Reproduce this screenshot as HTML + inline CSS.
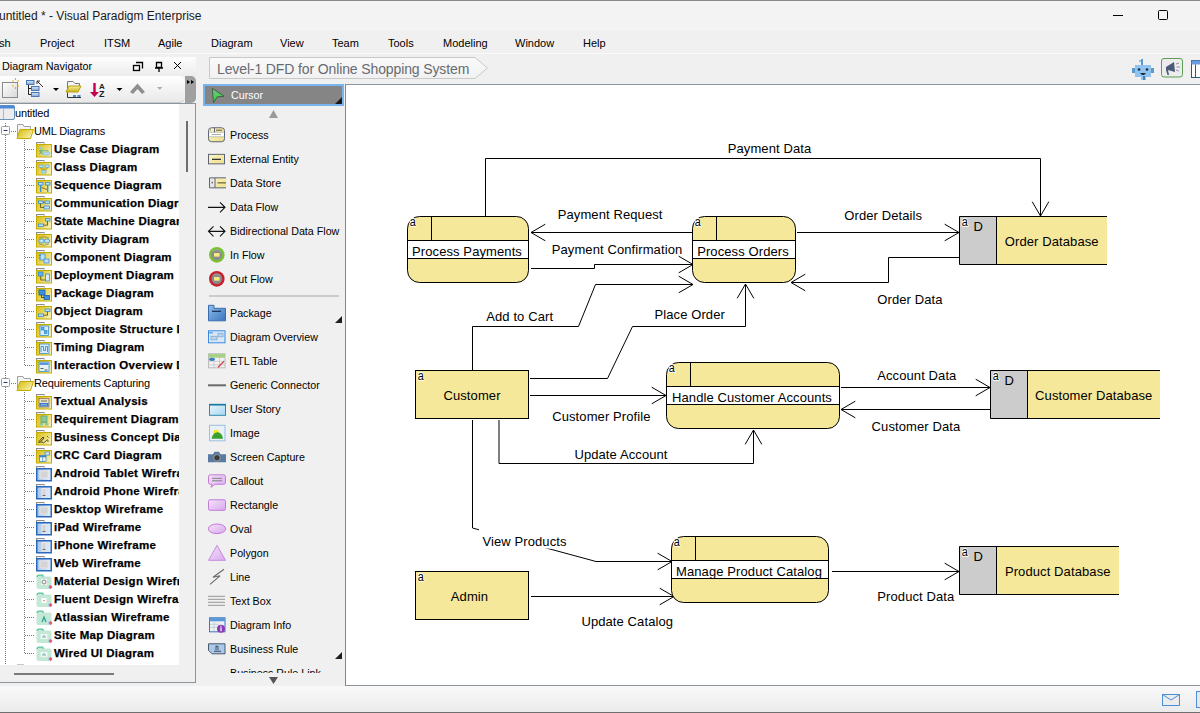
<!DOCTYPE html>
<html><head><meta charset="utf-8">
<style>
*{margin:0;padding:0;box-sizing:border-box}
html,body{width:1200px;height:713px;overflow:hidden}
body{position:relative;background:#f0f0f0;font-family:"Liberation Sans",sans-serif;color:#000}
.a{position:absolute}
.t{position:absolute;white-space:nowrap;font-size:11px;line-height:12px}
#title{left:0;top:0;width:1200px;height:31px;background:#f3f3f3;border-top:1px solid #8a8a8a}
#menu{left:0;top:31px;width:1200px;height:24px;background:#f0f0f0}
.mi{position:absolute;top:6px;font-size:11px;line-height:12px;white-space:nowrap}
#nav{left:0;top:56px;width:196px;height:627px;background:#f0f0f0}
#navhdr{left:0;top:57px;width:196px;height:19px;background:linear-gradient(#fdfdfd,#ececec)}
#navtb{left:0;top:76px;width:185px;height:27px;background:linear-gradient(#ffffff,#e9e9e9);border-radius:0 6px 6px 0;border-bottom:1px solid #c9c9c9}
#navgrip{left:185px;top:76px;width:11px;height:27px;background:#a0a0a0;border-radius:0 5px 5px 0}
#tree{left:0;top:103px;width:196px;height:580px;background:#f0f0f0;border:1px solid #8c949c;border-left:none}
#treew{left:0;top:104px;width:179px;height:561px;background:#fff}
.tr{position:absolute;white-space:nowrap;font-size:11px;line-height:14px;letter-spacing:-0.15px}
.tb{position:absolute;white-space:nowrap;font-size:11.5px;line-height:14px;font-weight:bold;letter-spacing:0.28px;-webkit-text-stroke:0.25px #000}
#pal{left:200px;top:84px;width:145px;height:602px;background:#f0f0f0}
.pt{position:absolute;white-space:nowrap;font-size:10.7px;line-height:13px}
#canvas{left:345px;top:84px;width:855px;height:602px;background:#fff;border-left:1px solid #7a8590;border-top:1px solid #8c949c;border-bottom:1px solid #8c949c}
#status{left:0;top:686px;width:1200px;height:27px;background:linear-gradient(#f9f9f9,#ebebeb);border-bottom:1px solid #6e6e6e}
</style></head><body>
<div id="title" class="a"></div>
<div class="t" style="left:-1px;top:9px;font-size:12px;line-height:14px;color:#1a1a1a">untitled * - Visual Paradigm Enterprise</div>
<div id="menu" class="a"></div>
<div class="mi" style="left:-1px;top:37px">sh</div>
<div class="mi" style="left:40px;top:37px">Project</div>
<div class="mi" style="left:104px;top:37px">ITSM</div>
<div class="mi" style="left:158px;top:37px">Agile</div>
<div class="mi" style="left:211px;top:37px">Diagram</div>
<div class="mi" style="left:280px;top:37px">View</div>
<div class="mi" style="left:332px;top:37px">Team</div>
<div class="mi" style="left:388px;top:37px">Tools</div>
<div class="mi" style="left:443px;top:37px">Modeling</div>
<div class="mi" style="left:515px;top:37px">Window</div>
<div class="mi" style="left:583px;top:37px">Help</div>

<div id="nav" class="a"></div>
<div id="navhdr" class="a"></div>
<div class="t" style="left:2px;top:60px;font-size:10.8px">Diagram Navigator</div>
<div id="navtb" class="a"></div>
<div id="navgrip" class="a"></div>
<div id="tree" class="a"></div>
<div id="treew" class="a"></div>

<div id="pal" class="a"></div>
<div id="canvas" class="a"></div>
<div id="status" class="a"></div>

<!-- window controls -->
<div class="a" style="left:1113px;top:15px;width:10px;height:1px;background:#000"></div>
<div class="a" style="left:1158px;top:10px;width:10px;height:10px;border:1px solid #000;border-radius:1.5px"></div>
<div class="a" style="left:0;top:53px;width:1200px;height:1px;background:#fafafa"></div>
<!-- breadcrumb -->
<svg class="a" style="left:200px;top:52px" width="300" height="30"><defs><linearGradient id="bc" x1="0" y1="0" x2="0" y2="1"><stop offset="0" stop-color="#fafafa"/><stop offset="1" stop-color="#f1f1f1"/></linearGradient></defs>
<path d="M9.5,5.5 H275 L287.5,16 L275,26.5 H9.5 Z" fill="url(#bc)" stroke="#c9c9c9"/></svg>
<div class="t" style="left:217px;top:61px;font-size:14px;line-height:16px;color:#676b71;letter-spacing:-0.12px">Level-1 DFD for Online Shopping System</div>
<!-- right toolbar icons -->
<svg class="a" style="left:1128px;top:56px" width="72" height="26">
<rect x="13" y="3" width="2" height="6" fill="#5a9ad0"/><rect x="11" y="4" width="2" height="2" fill="#90c4ef"/>
<rect x="7" y="9" width="16" height="12" fill="#90c4ef"/><rect x="4" y="12" width="3" height="5" fill="#5a9ad0"/><rect x="23" y="12" width="3" height="5" fill="#5a9ad0"/>
<rect x="13" y="21" width="5" height="3" fill="#90c4ef"/><rect x="15" y="20" width="2" height="4" fill="#4a80b8"/>
<circle cx="11" cy="13.5" r="1.3" fill="#1a2a40"/><circle cx="19" cy="13.5" r="1.3" fill="#1a2a40"/><path d="M12,17 H18 L16,19 H14 Z" fill="#1a2a40"/>
<rect x="33.5" y="2.5" width="21" height="18.5" rx="2.5" fill="#ececec" stroke="#5d9c54"/>
<path d="M38,11 L46,6 L47,16 L40,14 L41,19 L39.5,19 L38,14 Z" fill="#4a5a78"/><path d="M48,8 L51,7 M48.5,11 H52 M48,14 L51,15" stroke="#4a5a78" stroke-width="0.6"/>
<rect x="63.5" y="4.5" width="12" height="17" fill="#fff" stroke="#2a5a78"/><rect x="63.5" y="4.5" width="12" height="4" fill="#6a9ae0"/><path d="M67.5,8.5 V21.5" stroke="#2a5a78"/>
</svg>
<!-- status bar icons -->
<svg class="a" style="left:1158px;top:690px" width="42" height="20">
<rect x="4.5" y="4.5" width="17" height="11" fill="#ececec" stroke="#4a90d8"/><path d="M4.5,4.5 L13,10 L21.5,4.5" fill="none" stroke="#4a90d8"/>
<rect x="38.5" y="1.5" width="8" height="16" fill="#e8e8e8" stroke="#4a90d8"/>
</svg>
<svg class="a" style="left:130px;top:60px" width="56" height="14" viewBox="0 0 56 14" ><g fill="none" stroke="#000" stroke-width="1.3"><rect x="3.5" y="5.5" width="6" height="5"/><path d="M6,2.5 H12.5 V8.5"/><path d="M26.5,2.5 h5 v5 h-5 z M25,8 H33 M29,8 V12"/><path d="M44,2 L51,9 M51,2 L44,9" stroke-width="1"/></g></svg>
<svg class="a" style="left:0px;top:75px" width="196" height="28" viewBox="0 0 196 28" ><defs><linearGradient id="gw" x1="0" y1="0" x2="1" y2="1"><stop offset="0" stop-color="#fff"/><stop offset="1" stop-color="#d8d8d8"/></linearGradient><linearGradient id="gb" x1="0" y1="0" x2="0" y2="1"><stop offset="0" stop-color="#dbe8f7"/><stop offset="1" stop-color="#7fa6d6"/></linearGradient><linearGradient id="gy" x1="0" y1="0" x2="0" y2="1"><stop offset="0" stop-color="#f7ef9a"/><stop offset="1" stop-color="#c9b21a"/></linearGradient></defs><rect x="2.5" y="7.5" width="15" height="15" fill="url(#gw)" stroke="#8a8a8a"/><g stroke="#f0b400" stroke-width="1.2"><path d="M12,6 h2 M17,6 h2 M12,11 h2 M17,11 h2 M15.5,3 v2 M15.5,12 v2"/></g><path d="M28.5,9.5 V19.5 H31.5 M28.5,13.5 H31.5" fill="none" stroke="#222"/><rect x="26.5" y="5.5" width="7.5" height="4" fill="url(#gb)" stroke="#4a78b0"/><rect x="31.5" y="11.5" width="7.5" height="4" fill="url(#gb)" stroke="#4a78b0"/><rect x="31.5" y="17.5" width="7.5" height="4" fill="url(#gb)" stroke="#4a78b0"/><path d="M37,6 L43,12 M37,6 h3 M37,6 v3" stroke="#333" fill="none"/><path d="M53,13 h6 l-3,3 z" fill="#000"/><path d="M67.5,22 V6.5 H73 L75,8.5 H79.5 V11" fill="#f4f4f4" stroke="#777"/><path d="M66,17 L69,11 H81 L78,17 Z" fill="url(#gy)" stroke="#b8a010"/><path d="M67.5,18 V22.5 H81" stroke="#333" fill="none"/><rect x="73" y="20" width="3" height="2" fill="#4a8ad0"/><rect x="77.5" y="20" width="3" height="2" fill="#4a8ad0"/><path d="M94.5,8 V19" stroke="#c4004c" stroke-width="2.4"/><path d="M90,17 L94.5,22 L99,17 Z" fill="#c4004c"/><text x="99" y="13.5" font-family="Liberation Sans" font-weight="bold" font-size="8" fill="#222">A</text><text x="99" y="22" font-family="Liberation Sans" font-weight="bold" font-size="9" fill="#222">Z</text><path d="M116.5,13 h6 l-3,3 z" fill="#000"/><path d="M130,17 L137.5,8.5 L145,17 L142,19 L137.5,14 L133,19 Z" fill="#8f8f8f"/><path d="M157,12 h5.5 l-2.75,2.75 z" fill="#aaa"/><path d="M187,5 l3,2 l-3,2 z M191,5 l3,2 l-3,2 z" fill="#000"/></svg>
<div class="a" style="left:0;top:104px;width:179px;height:561px;overflow:hidden"><svg class="a" style="left:0;top:0" width="179" height="561"><defs><linearGradient id="fy" x1="0" y1="0" x2="1" y2="0.6"><stop offset="0" stop-color="#d6ba10"/><stop offset="0.55" stop-color="#e8d658"/><stop offset="1" stop-color="#f6eeb0"/></linearGradient><linearGradient id="fb" x1="0" y1="0" x2="1" y2="0"><stop offset="0" stop-color="#a6c4ea"/><stop offset="1" stop-color="#e6eef8"/></linearGradient></defs><path d="M5.5,19 V561" stroke="#7a7a7a" stroke-width="1" stroke-dasharray="1,1"/><path d="M24.5,36 V261.5" stroke="#7a7a7a" stroke-width="1" stroke-dasharray="1,1"/><path d="M24.5,288 V549.5" stroke="#7a7a7a" stroke-width="1" stroke-dasharray="1,1"/><rect x="1.5" y="22.5" width="8" height="8" rx="1" fill="#fff" stroke="#9a9a9a"/><path d="M3.5,26.5 H7.5" stroke="#1e3c78"/><path d="M11,27.5 H17" stroke="#7a7a7a" stroke-width="1" stroke-dasharray="1,1"/><rect x="1.5" y="274.5" width="8" height="8" rx="1" fill="#fff" stroke="#9a9a9a"/><path d="M3.5,278.5 H7.5" stroke="#1e3c78"/><path d="M11,279.5 H17" stroke="#7a7a7a" stroke-width="1" stroke-dasharray="1,1"/><rect x="-2" y="1.5" width="16.5" height="14" rx="1.5" fill="#ececec" stroke="#6a90b8"/><rect x="-2" y="1.5" width="16.5" height="3" rx="1" fill="#4a88d8"/><path d="M3.5,4.5 V15" stroke="#a9b8c8"/><g transform="translate(17,20)"><path d="M0.5,13 V0.5 H6 L7,2.5 H13.5 V10" fill="#f4f4f4" stroke="#a0a0a0"/><path d="M0,14.5 L3,5.5 H16.5 L13.5,14.5 Z" fill="url(#fy)" stroke="#c3ab00"/></g><g transform="translate(17,272)"><path d="M0.5,13 V0.5 H6 L7,2.5 H13.5 V10" fill="#f4f4f4" stroke="#a0a0a0"/><path d="M0,14.5 L3,5.5 H16.5 L13.5,14.5 Z" fill="url(#fy)" stroke="#c3ab00"/></g><path d="M25,45.5 H34" stroke="#7a7a7a" stroke-width="1" stroke-dasharray="1,1"/><g transform="translate(36,38)"><defs></defs><rect x="0.5" y="0.5" width="7.5" height="2" fill="#f2f2f2" stroke="#8c8c8c"/><rect x="0.5" y="2.5" width="15" height="12.5" fill="url(#fy)" stroke="#c3ab00"/><circle cx="5" cy="6" r="1.5" fill="#8fd0e0"/><path d="M5,7.5 V10 L3.5,12.5 M5,10 L6.5,12.5 M3,9 H7" stroke="#4ab0a0" fill="none"/><rect x="7" y="10" width="7" height="3" rx="1.5" fill="#b8dcf0" stroke="#6aaed0" stroke-width="0.6"/><path d="M6,8.5 H12 V10" stroke="#4ab0a0" fill="none" stroke-width="0.6"/></g><path d="M25,63.5 H34" stroke="#7a7a7a" stroke-width="1" stroke-dasharray="1,1"/><g transform="translate(36,56)"><defs></defs><rect x="0.5" y="0.5" width="7.5" height="2" fill="#f2f2f2" stroke="#8c8c8c"/><rect x="0.5" y="2.5" width="15" height="12.5" fill="url(#fy)" stroke="#c3ab00"/><rect x="3" y="5" width="4" height="2.5" fill="#b8dcf0" stroke="#6aaed0" stroke-width="0.7"/><rect x="9" y="5" width="4" height="2.5" fill="#b8dcf0" stroke="#6aaed0" stroke-width="0.7"/><rect x="6" y="10.5" width="4" height="2.5" fill="#b8dcf0" stroke="#6aaed0" stroke-width="0.7"/><path d="M5,7.5 V9 H11 V7.5 M8,9 V10.5" stroke="#a08800" fill="none" stroke-width="0.7"/></g><path d="M25,81.5 H34" stroke="#7a7a7a" stroke-width="1" stroke-dasharray="1,1"/><g transform="translate(36,74)"><defs></defs><rect x="0.5" y="0.5" width="7.5" height="2" fill="#f2f2f2" stroke="#8c8c8c"/><rect x="0.5" y="2.5" width="15" height="12.5" fill="url(#fy)" stroke="#c3ab00"/><rect x="2.5" y="4.5" width="4.5" height="2.5" fill="#bfe0f5" stroke="#3a8fd0" stroke-width="0.8"/><rect x="9.5" y="4.5" width="4.5" height="2.5" fill="#bfe0f5" stroke="#3a8fd0" stroke-width="0.8"/><path d="M4.7,7 V14 M11.7,7 V14" stroke="#3a8fd0" stroke-width="1.3"/><path d="M5.5,9.5 L11,11.5" stroke="#7a6a20" stroke-width="0.9"/></g><path d="M25,99.5 H34" stroke="#7a7a7a" stroke-width="1" stroke-dasharray="1,1"/><g transform="translate(36,92)"><defs></defs><rect x="0.5" y="0.5" width="7.5" height="2" fill="#f2f2f2" stroke="#8c8c8c"/><rect x="0.5" y="2.5" width="15" height="12.5" fill="url(#fy)" stroke="#c3ab00"/><rect x="2.5" y="5" width="4.5" height="2.5" fill="#bfe0f5" stroke="#3a8fd0" stroke-width="0.8"/><rect x="9" y="5" width="4.5" height="2.5" fill="#bfe0f5" stroke="#3a8fd0" stroke-width="0.8"/><rect x="8" y="10" width="5.5" height="3" fill="#bfe0f5" stroke="#3a8fd0" stroke-width="0.8"/><path d="M7,6.2 H9 M4.5,7.5 V11.5 H8" stroke="#5a4a10" stroke-width="0.8" fill="none"/></g><path d="M25,117.5 H34" stroke="#7a7a7a" stroke-width="1" stroke-dasharray="1,1"/><g transform="translate(36,110)"><defs></defs><rect x="0.5" y="0.5" width="7.5" height="2" fill="#f2f2f2" stroke="#8c8c8c"/><rect x="0.5" y="2.5" width="15" height="12.5" fill="url(#fy)" stroke="#c3ab00"/><rect x="2.5" y="10" width="5" height="2.5" fill="#bfe0f5" stroke="#3a8fd0" stroke-width="0.8"/><rect x="9.5" y="4.5" width="4.5" height="2.5" fill="#bfe0f5" stroke="#3a8fd0" stroke-width="0.8"/><path d="M7.5,11.2 H11.5 V7" stroke="#5a4a10" stroke-width="0.8" fill="none"/></g><path d="M25,135.5 H34" stroke="#7a7a7a" stroke-width="1" stroke-dasharray="1,1"/><g transform="translate(36,128)"><defs></defs><rect x="0.5" y="0.5" width="7.5" height="2" fill="#f2f2f2" stroke="#8c8c8c"/><rect x="0.5" y="2.5" width="15" height="12.5" fill="url(#fy)" stroke="#c3ab00"/><ellipse cx="5.5" cy="9" rx="2.8" ry="2" fill="#bfe0f5" stroke="#3a8fd0" stroke-width="0.8"/><ellipse cx="11" cy="9" rx="2.8" ry="2" fill="#bfe0f5" stroke="#3a8fd0" stroke-width="0.8"/><path d="M3,6 Q8,3.5 13,6 M3,12 Q8,14.5 13,12" stroke="#8a7a30" stroke-width="0.7" fill="none"/></g><path d="M25,153.5 H34" stroke="#7a7a7a" stroke-width="1" stroke-dasharray="1,1"/><g transform="translate(36,146)"><defs></defs><rect x="0.5" y="0.5" width="7.5" height="2" fill="#f2f2f2" stroke="#8c8c8c"/><rect x="0.5" y="2.5" width="15" height="12.5" fill="url(#fy)" stroke="#c3ab00"/><rect x="4" y="4" width="5" height="6" fill="#bfe0f5" stroke="#3a8fd0" stroke-width="0.8"/><rect x="8" y="9" width="5" height="4" fill="#bfe0f5" stroke="#3a8fd0" stroke-width="0.8"/><path d="M3,5.5 h2 M3,8 h2" stroke="#3a8fd0" stroke-width="0.9"/></g><path d="M25,171.5 H34" stroke="#7a7a7a" stroke-width="1" stroke-dasharray="1,1"/><g transform="translate(36,164)"><defs></defs><rect x="0.5" y="0.5" width="7.5" height="2" fill="#f2f2f2" stroke="#8c8c8c"/><rect x="0.5" y="2.5" width="15" height="12.5" fill="url(#fy)" stroke="#c3ab00"/><rect x="2.5" y="4" width="4.5" height="4" fill="#5ab0e8" stroke="#3a8fd0" stroke-width="0.8"/><rect x="9.5" y="6" width="4" height="7" fill="#d8ecf8" stroke="#3a8fd0" stroke-width="0.8"/><path d="M4.7,8 V12 H9.5" stroke="#5a4a10" stroke-width="0.8" fill="none"/></g><path d="M25,189.5 H34" stroke="#7a7a7a" stroke-width="1" stroke-dasharray="1,1"/><g transform="translate(36,182)"><defs></defs><rect x="0.5" y="0.5" width="7.5" height="2" fill="#f2f2f2" stroke="#8c8c8c"/><rect x="0.5" y="2.5" width="15" height="12.5" fill="url(#fy)" stroke="#c3ab00"/><rect x="3" y="4" width="6" height="5" fill="#3a90e0" stroke="#1a60b0" stroke-width="0.8"/><rect x="8" y="9.5" width="5.5" height="4" fill="#3a90e0" stroke="#1a60b0" stroke-width="0.8"/><path d="M5.5,9 V11.5 H8" stroke="#2a2a10" stroke-width="0.8" fill="none"/></g><path d="M25,207.5 H34" stroke="#7a7a7a" stroke-width="1" stroke-dasharray="1,1"/><g transform="translate(36,200)"><defs></defs><rect x="0.5" y="0.5" width="7.5" height="2" fill="#f2f2f2" stroke="#8c8c8c"/><rect x="0.5" y="2.5" width="15" height="12.5" fill="url(#fy)" stroke="#c3ab00"/><rect x="2.5" y="10" width="5" height="2.5" fill="#bfe0f5" stroke="#3a8fd0" stroke-width="0.8"/><rect x="9" y="5" width="5" height="2.5" fill="#bfe0f5" stroke="#3a8fd0" stroke-width="0.8"/><path d="M7.5,11.2 H11.5 V7.5" stroke="#5a4a10" stroke-width="0.8" fill="none"/></g><path d="M25,225.5 H34" stroke="#7a7a7a" stroke-width="1" stroke-dasharray="1,1"/><g transform="translate(36,218)"><defs></defs><rect x="0.5" y="0.5" width="7.5" height="2" fill="#f2f2f2" stroke="#8c8c8c"/><rect x="0.5" y="2.5" width="15" height="12.5" fill="url(#fy)" stroke="#c3ab00"/><rect x="4" y="4" width="8.5" height="9.5" fill="#d8ecf8" stroke="#3a8fd0" stroke-width="0.8"/><rect x="5.5" y="5.5" width="2.5" height="2.5" fill="#5ab0e8" stroke="#3a8fd0" stroke-width="0.8"/><rect x="8.5" y="8.5" width="2.5" height="3" fill="#5ab0e8" stroke="#3a8fd0" stroke-width="0.8"/></g><path d="M25,243.5 H34" stroke="#7a7a7a" stroke-width="1" stroke-dasharray="1,1"/><g transform="translate(36,236)"><defs></defs><rect x="0.5" y="0.5" width="7.5" height="2" fill="#f2f2f2" stroke="#8c8c8c"/><rect x="0.5" y="2.5" width="15" height="12.5" fill="url(#fy)" stroke="#c3ab00"/><rect x="3.5" y="4" width="9.5" height="9.5" fill="#d8ecf8" stroke="#3a8fd0" stroke-width="0.8"/><path d="M5,12 V6.5 H7.5 V10.5 H9.5 V6.5 H11.5 V12" stroke="#3a8fd0" stroke-width="0.9" fill="none"/></g><path d="M25,261.5 H34" stroke="#7a7a7a" stroke-width="1" stroke-dasharray="1,1"/><g transform="translate(36,254)"><defs></defs><rect x="0.5" y="0.5" width="7.5" height="2" fill="#f2f2f2" stroke="#8c8c8c"/><rect x="0.5" y="2.5" width="15" height="12.5" fill="url(#fy)" stroke="#c3ab00"/><rect x="3" y="4" width="10" height="9.5" fill="#e8f2fa" stroke="#3a8fd0" stroke-width="0.8"/><rect x="3.5" y="4.5" width="9" height="2.5" fill="#5a9ad8"/><path d="M4.5,10.5 h3 M8.5,12 h3" stroke="#333" stroke-width="0.8"/></g><path d="M25,297.5 H34" stroke="#7a7a7a" stroke-width="1" stroke-dasharray="1,1"/><g transform="translate(36,290)"><defs></defs><rect x="0.5" y="0.5" width="7.5" height="2" fill="#f2f2f2" stroke="#8c8c8c"/><rect x="0.5" y="2.5" width="15" height="12.5" fill="url(#fy)" stroke="#c3ab00"/><rect x="3" y="4.5" width="10" height="8.5" fill="#e8e0c8" stroke="#8a7a60" stroke-width="0.8"/><rect x="3.5" y="9" width="9" height="3.5" fill="#3a78c8"/><path d="M5,10.8 h6" stroke="#fff" stroke-width="0.8" stroke-dasharray="1.5,0.7"/><path d="M5,7 h6" stroke="#6a6a4a" stroke-width="0.9"/></g><path d="M25,315.5 H34" stroke="#7a7a7a" stroke-width="1" stroke-dasharray="1,1"/><g transform="translate(36,308)"><defs></defs><rect x="0.5" y="0.5" width="7.5" height="2" fill="#f2f2f2" stroke="#8c8c8c"/><rect x="0.5" y="2.5" width="15" height="12.5" fill="url(#fy)" stroke="#c3ab00"/><rect x="5" y="4" width="6" height="6" fill="#8ac8a0" stroke="#5aa070" stroke-width="0.7"/><rect x="3.5" y="11" width="3.5" height="2.5" fill="#8ac8a0"/><rect x="9" y="11" width="3.5" height="2.5" fill="#8ac8a0"/><path d="M8,10 V11 M5,11 V10.5 H11 V11" stroke="#5aa070" stroke-width="0.6" fill="none"/></g><path d="M25,333.5 H34" stroke="#7a7a7a" stroke-width="1" stroke-dasharray="1,1"/><g transform="translate(36,326)"><defs></defs><rect x="0.5" y="0.5" width="7.5" height="2" fill="#f2f2f2" stroke="#8c8c8c"/><rect x="0.5" y="2.5" width="15" height="12.5" fill="url(#fy)" stroke="#c3ab00"/><path d="M2.5,12 L7,7 L8,8 L3.5,13 Z" fill="none" stroke="#222" stroke-width="0.8"/><path d="M5,12 Q8,14 10,11 Q12,8 12,12 M11,6 l1.5,1.5" stroke="#222" stroke-width="0.7" fill="none"/></g><path d="M25,351.5 H34" stroke="#7a7a7a" stroke-width="1" stroke-dasharray="1,1"/><g transform="translate(36,344)"><defs></defs><rect x="0.5" y="0.5" width="7.5" height="2" fill="#f2f2f2" stroke="#8c8c8c"/><rect x="0.5" y="2.5" width="15" height="12.5" fill="url(#fy)" stroke="#c3ab00"/><rect x="9" y="4" width="4.5" height="3" fill="#d8ecf8" stroke="#3a8fd0" stroke-width="0.8"/><rect x="3.5" y="7.5" width="6.5" height="6" fill="#eef6fc" stroke="#3a8fd0" stroke-width="0.8"/><rect x="3.5" y="7.5" width="6.5" height="1.8" fill="#3a80d0"/><path d="M6.7,9.3 V13.5" stroke="#3a80d0" stroke-width="0.7"/></g><path d="M25,369.5 H34" stroke="#7a7a7a" stroke-width="1" stroke-dasharray="1,1"/><g transform="translate(36,362)"><rect x="0.5" y="0.5" width="7.5" height="2" fill="#f2f2f2" stroke="#8c8c8c"/><rect x="0.75" y="2.75" width="14.5" height="12" fill="url(#fb)" stroke="#2a68bc" stroke-width="1.5"/><rect x="4" y="5" width="8" height="7" fill="#d4d4d4" stroke="#e8e8e8" stroke-width="0.8"/></g><path d="M25,387.5 H34" stroke="#7a7a7a" stroke-width="1" stroke-dasharray="1,1"/><g transform="translate(36,380)"><rect x="0.5" y="0.5" width="7.5" height="2" fill="#f2f2f2" stroke="#8c8c8c"/><rect x="0.75" y="2.75" width="14.5" height="12" fill="url(#fb)" stroke="#2a68bc" stroke-width="1.5"/><rect x="6" y="4.5" width="4" height="8.5" fill="#d4d4d4" stroke="#f0f0f0" stroke-width="0.8"/><path d="M6.5,11.5 H9.5" stroke="#555" stroke-width="0.8"/></g><path d="M25,405.5 H34" stroke="#7a7a7a" stroke-width="1" stroke-dasharray="1,1"/><g transform="translate(36,398)"><rect x="0.5" y="0.5" width="7.5" height="2" fill="#f2f2f2" stroke="#8c8c8c"/><rect x="0.75" y="2.75" width="14.5" height="12" fill="url(#fb)" stroke="#2a68bc" stroke-width="1.5"/><rect x="4" y="5" width="8" height="7" fill="#d4d4d4" stroke="#e8e8e8" stroke-width="0.8"/></g><path d="M25,423.5 H34" stroke="#7a7a7a" stroke-width="1" stroke-dasharray="1,1"/><g transform="translate(36,416)"><rect x="0.5" y="0.5" width="7.5" height="2" fill="#f2f2f2" stroke="#8c8c8c"/><rect x="0.75" y="2.75" width="14.5" height="12" fill="url(#fb)" stroke="#2a68bc" stroke-width="1.5"/><rect x="6" y="4.5" width="4" height="8.5" fill="#d4d4d4" stroke="#f0f0f0" stroke-width="0.8"/><path d="M6.5,11.5 H9.5" stroke="#555" stroke-width="0.8"/></g><path d="M25,441.5 H34" stroke="#7a7a7a" stroke-width="1" stroke-dasharray="1,1"/><g transform="translate(36,434)"><rect x="0.5" y="0.5" width="7.5" height="2" fill="#f2f2f2" stroke="#8c8c8c"/><rect x="0.75" y="2.75" width="14.5" height="12" fill="url(#fb)" stroke="#2a68bc" stroke-width="1.5"/><rect x="6" y="4.5" width="4" height="8.5" fill="#d4d4d4" stroke="#f0f0f0" stroke-width="0.8"/><path d="M6.5,11.5 H9.5" stroke="#555" stroke-width="0.8"/></g><path d="M25,459.5 H34" stroke="#7a7a7a" stroke-width="1" stroke-dasharray="1,1"/><g transform="translate(36,452)"><rect x="0.5" y="0.5" width="7.5" height="2" fill="#f2f2f2" stroke="#8c8c8c"/><rect x="0.75" y="2.75" width="14.5" height="12" fill="url(#fb)" stroke="#2a68bc" stroke-width="1.5"/><rect x="4" y="5" width="8" height="7" fill="#d4d4d4" stroke="#e8e8e8" stroke-width="0.8"/></g><path d="M25,477.5 H34" stroke="#7a7a7a" stroke-width="1" stroke-dasharray="1,1"/><g transform="translate(36,470)"><path d="M0.5,4 Q0.5,1 3,1 H7 L8,2.5 H14 Q15.5,2.5 15.5,4 V13 Q15.5,15 13.5,15 H2.5 Q0.5,15 0.5,13 Z" fill="#c3e8d6"/><path d="M1,3 Q1,1.2 3,1.2 H6.5 L7.5,2.6" fill="none" stroke="#59c49c" stroke-width="1.3"/><rect x="5" y="5" width="6" height="6" fill="#f4f4f4"/><circle cx="8" cy="8" r="2" fill="none" stroke="#888" stroke-width="1"/><circle cx="14" cy="13" r="2.2" fill="#aee0f5"/><path d="M14.5,11 L16.5,13 L14.5,15 L12.5,13 Z" fill="#e05a6a"/></g><path d="M25,495.5 H34" stroke="#7a7a7a" stroke-width="1" stroke-dasharray="1,1"/><g transform="translate(36,488)"><path d="M0.5,4 Q0.5,1 3,1 H7 L8,2.5 H14 Q15.5,2.5 15.5,4 V13 Q15.5,15 13.5,15 H2.5 Q0.5,15 0.5,13 Z" fill="#c3e8d6"/><path d="M1,3 Q1,1.2 3,1.2 H6.5 L7.5,2.6" fill="none" stroke="#59c49c" stroke-width="1.3"/><rect x="5.5" y="6" width="5" height="5" fill="#fff"/><rect x="7.5" y="8" width="1.2" height="1.2" fill="#e05060"/><circle cx="14" cy="13" r="2.2" fill="#aee0f5"/><path d="M14.5,11 L16.5,13 L14.5,15 L12.5,13 Z" fill="#e05a6a"/></g><path d="M25,513.5 H34" stroke="#7a7a7a" stroke-width="1" stroke-dasharray="1,1"/><g transform="translate(36,506)"><path d="M0.5,4 Q0.5,1 3,1 H7 L8,2.5 H14 Q15.5,2.5 15.5,4 V13 Q15.5,15 13.5,15 H2.5 Q0.5,15 0.5,13 Z" fill="#c3e8d6"/><path d="M1,3 Q1,1.2 3,1.2 H6.5 L7.5,2.6" fill="none" stroke="#59c49c" stroke-width="1.3"/><path d="M6,12 L8,7 L10,12" fill="none" stroke="#22a090" stroke-width="1.2"/><circle cx="14" cy="13" r="2.2" fill="#aee0f5"/><path d="M14.5,11 L16.5,13 L14.5,15 L12.5,13 Z" fill="#e05a6a"/></g><path d="M25,531.5 H34" stroke="#7a7a7a" stroke-width="1" stroke-dasharray="1,1"/><g transform="translate(36,524)"><path d="M0.5,4 Q0.5,1 3,1 H7 L8,2.5 H14 Q15.5,2.5 15.5,4 V13 Q15.5,15 13.5,15 H2.5 Q0.5,15 0.5,13 Z" fill="#c3e8d6"/><path d="M1,3 Q1,1.2 3,1.2 H6.5 L7.5,2.6" fill="none" stroke="#59c49c" stroke-width="1.3"/><rect x="4.5" y="6" width="7" height="5" fill="#f4f4f4"/><path d="M6,9 h4 M8,7 v2" stroke="#4ab0a0" stroke-width="0.8"/><circle cx="14" cy="13" r="2.2" fill="#aee0f5"/><path d="M14.5,11 L16.5,13 L14.5,15 L12.5,13 Z" fill="#e05a6a"/></g><path d="M25,549.5 H34" stroke="#7a7a7a" stroke-width="1" stroke-dasharray="1,1"/><g transform="translate(36,542)"><path d="M0.5,4 Q0.5,1 3,1 H7 L8,2.5 H14 Q15.5,2.5 15.5,4 V13 Q15.5,15 13.5,15 H2.5 Q0.5,15 0.5,13 Z" fill="#c3e8d6"/><path d="M1,3 Q1,1.2 3,1.2 H6.5 L7.5,2.6" fill="none" stroke="#59c49c" stroke-width="1.3"/><rect x="4.5" y="6" width="7" height="5" fill="#f4f4f4"/><path d="M6,9 h4 M8,7 v2" stroke="#4ab0a0" stroke-width="0.8"/><circle cx="14" cy="13" r="2.2" fill="#aee0f5"/><path d="M14.5,11 L16.5,13 L14.5,15 L12.5,13 Z" fill="#e05a6a"/></g></svg><div class="a" style="left:0;top:-104px;width:179px;height:700px"><div class="tr" style="left:15px;top:106px">untitled</div><div class="tr" style="left:34px;top:124px">UML Diagrams</div><div class="tr" style="left:34px;top:376px">Requirements Capturing</div><div class="tb" style="left:54px;top:142px">Use Case Diagram</div><div class="tb" style="left:54px;top:160px">Class Diagram</div><div class="tb" style="left:54px;top:178px">Sequence Diagram</div><div class="tb" style="left:54px;top:196px">Communication Diagram</div><div class="tb" style="left:54px;top:214px">State Machine Diagram</div><div class="tb" style="left:54px;top:232px">Activity Diagram</div><div class="tb" style="left:54px;top:250px">Component Diagram</div><div class="tb" style="left:54px;top:268px">Deployment Diagram</div><div class="tb" style="left:54px;top:286px">Package Diagram</div><div class="tb" style="left:54px;top:304px">Object Diagram</div><div class="tb" style="left:54px;top:322px">Composite Structure Diagram</div><div class="tb" style="left:54px;top:340px">Timing Diagram</div><div class="tb" style="left:54px;top:358px">Interaction Overview Diagram</div><div class="tb" style="left:54px;top:394px">Textual Analysis</div><div class="tb" style="left:54px;top:412px">Requirement Diagram</div><div class="tb" style="left:54px;top:430px">Business Concept Diagram</div><div class="tb" style="left:54px;top:448px">CRC Card Diagram</div><div class="tb" style="left:54px;top:466px">Android Tablet Wireframe</div><div class="tb" style="left:54px;top:484px">Android Phone Wireframe</div><div class="tb" style="left:54px;top:502px">Desktop Wireframe</div><div class="tb" style="left:54px;top:520px">iPad Wireframe</div><div class="tb" style="left:54px;top:538px">iPhone Wireframe</div><div class="tb" style="left:54px;top:556px">Web Wireframe</div><div class="tb" style="left:54px;top:574px">Material Design Wireframe</div><div class="tb" style="left:54px;top:592px">Fluent Design Wireframe</div><div class="tb" style="left:54px;top:610px">Atlassian Wireframe</div><div class="tb" style="left:54px;top:628px">Site Map Diagram</div><div class="tb" style="left:54px;top:646px">Wired UI Diagram</div></div></div>
<div class="a" style="left:17px;top:664px;width:7px;height:1px;background:#c8c8c8"></div>
<div class="a" style="left:186px;top:121px;width:2px;height:51px;background:#6e6e6e"></div>
<div class="a" style="left:14px;top:673px;width:100px;height:2px;background:#7a7a7a"></div>
<div class="a" style="left:203px;top:84px;width:141px;height:22px;background:#78b4ee"></div>
<div class="a" style="left:205px;top:86px;width:137px;height:18px;background:#858585"></div>
<svg class="a" style="left:205px;top:86px" width="139" height="18" viewBox="0 0 139 18" ><defs><linearGradient id="gc" x1="0" y1="0" x2="0.3" y2="1"><stop offset="0" stop-color="#8ab890"/><stop offset="1" stop-color="#22e038"/></linearGradient></defs><path d="M7.3,2.2 L19,10.3 L12.2,10.8 L8.5,16.8 Z" fill="url(#gc)" stroke="#3a5a40" stroke-width="0.9" stroke-linejoin="round"/><path d="M130,18 L137,11 V18 Z" fill="#1a1a1a"/></svg>
<div class="pt" style="left:231px;top:89px;color:#fff">Cursor</div>
<svg class="a" style="left:268px;top:109px" width="11" height="10" viewBox="0 0 11 10" ><path d="M1,9 L5.5,1 L10,9 Z" fill="#9a9a9a"/></svg>
<div class="a" style="left:209px;top:295px;width:130px;height:2px;background:#cbcbcb"></div>
<svg class="a" style="left:0px;top:0px" width="350" height="700" viewBox="0 0 350 700" ><defs><linearGradient id="py" x1="0" y1="0" x2="1" y2="1"><stop offset="0" stop-color="#fbf6c8"/><stop offset="1" stop-color="#f0df88"/></linearGradient><linearGradient id="pb" x1="0" y1="0" x2="1" y2="1"><stop offset="0" stop-color="#8ec0ec"/><stop offset="1" stop-color="#3a74bc"/></linearGradient><linearGradient id="pp" x1="0" y1="0" x2="1" y2="1"><stop offset="0" stop-color="#f4e4fa"/><stop offset="1" stop-color="#d8a8ec"/></linearGradient><linearGradient id="pu" x1="0" y1="0" x2="1" y2="1"><stop offset="0" stop-color="#eaf6fc"/><stop offset="1" stop-color="#a8d8f0"/></linearGradient></defs><g transform="translate(208,127.25)"><rect x="0.5" y="0.5" width="16" height="14" rx="3" fill="url(#py)" stroke="#5c6474"/><rect x="1" y="5.2" width="15" height="4.3" fill="#fff"/><path d="M0.5,5 H16.5 M0.5,9.5 H16.5" stroke="#9aa0a8" stroke-width="0.6"/><path d="M6.5,0.5 V5" stroke="#5c6474"/><path d="M8,3 H14" stroke="#7a7050" stroke-width="1.2"/><path d="M3.5,7.3 H13" stroke="#aaa" stroke-width="1"/><path d="M2.5,2 v1.5" stroke="#888" stroke-width="0.8"/></g><g transform="translate(208,153.85)"><rect x="0.5" y="0.5" width="16" height="9.5" fill="url(#py)" stroke="#5c6474"/><path d="M4,5.5 H13" stroke="#333" stroke-width="1.3"/></g><g transform="translate(209,177.35)"><rect x="0.5" y="0.5" width="16.5" height="10" fill="url(#py)"/><rect x="0.5" y="0.5" width="5.5" height="10" fill="#e8e8e8"/><path d="M17,0.5 H0.5 V10.5 H17 M6,0.5 V10.5" stroke="#5c6474" fill="none"/><path d="M8.5,5.5 H17" stroke="#6a6040" stroke-width="1.2"/><rect x="2.5" y="4.5" width="1.5" height="1.5" fill="#666"/></g><g transform="translate(208,206.85)" fill="none" stroke="#111" stroke-width="1.1"><path d="M0,0.5 H17 M12,-4.5 L17,0.5 L12,5.5"/></g><g transform="translate(208,230.85)" fill="none" stroke="#111" stroke-width="1.1"><path d="M0.5,0.5 H17 M12,-4.5 L17,0.5 L12,5.5 M5.5,-4.5 L0.5,0.5 L5.5,5.5"/></g><g transform="translate(216.8,254.85)"><circle r="7.8" fill="#7ac232"/><circle r="5.6" fill="#8a8a8a" stroke="#7ac232" stroke-width="0.6"/><path d="M-4,-3 A5,5 0 0 1 4,-3" stroke="#aaa" fill="none" stroke-width="0.8"/><rect x="-2.8" y="-1.8" width="5.6" height="3.6" fill="#f6ea80"/></g><g transform="translate(216.8,278.85)"><circle r="7.8" fill="#c8202c"/><circle r="5.6" fill="#8a8a8a" stroke="#c8202c" stroke-width="0.6"/><path d="M-4,-3 A5,5 0 0 1 4,-3" stroke="#aaa" fill="none" stroke-width="0.8"/><rect x="-2.8" y="-1.8" width="5.6" height="3.6" fill="#f6ea80"/></g><g transform="translate(208,304.8)"><path d="M0.5,16 V0.5 H6 V3.5 H17.5 V16 Z" fill="url(#pb)" stroke="#3a6cb0"/><path d="M4,6.5 H13" stroke="#1a2a50" stroke-width="1.2"/></g><g transform="translate(208,330.3)"><rect x="0.5" y="0.5" width="16.5" height="12" fill="#d6e8f8" stroke="#3a8ae0"/><rect x="3" y="6" width="6" height="3.5" fill="#b8d4f0" stroke="#8aa8c8" stroke-width="0.8"/><rect x="10" y="3" width="5" height="3.5" fill="#b8d4f0" stroke="#8aa8c8" stroke-width="0.8"/><path d="M1,2.5 H5" stroke="#6aa8e8" stroke-width="1.5"/></g><g transform="translate(208,353.3)"><rect x="0.5" y="0.5" width="16.5" height="14" fill="#f2f2f2" stroke="#bbb"/><rect x="0.5" y="0.5" width="16.5" height="4" fill="#a8d088"/><path d="M0.5,8 H17 M0.5,11.5 H17 M6,4.5 V15 M11.5,4.5 V15" stroke="#c8c8c8" stroke-width="0.8"/><ellipse cx="4" cy="6" rx="3" ry="1.6" fill="#3a7ac8"/><path d="M10,14 L16,8" stroke="#d04050" stroke-width="1.3"/></g><path d="M208,385.3 H226" stroke="#6a6a6a" stroke-width="2"/><rect x="209.5" y="404.3" width="16" height="11" fill="url(#pu)" stroke="#2a8ab0"/><path d="M209.5,404.8 H225.5" stroke="#1a7aa0" stroke-width="1.5"/><g transform="translate(209,424.8)"><rect x="0.5" y="0.5" width="15.5" height="15.5" fill="#e8f0f8" stroke="#9ac0e0"/><circle cx="7" cy="8" r="3" fill="#f8e820"/><path d="M2.5,14 Q4,7.5 8.5,7.5 Q13,7.5 14,14 Z" fill="#3aa030"/></g><g transform="translate(208,451.3)"><path d="M0,3 H5 L6.5,0.5 H11 L12.5,3 H18 V11 H0 Z" fill="#5a7aa0"/><circle cx="9" cy="6.5" r="3.2" fill="#3a3a3a" stroke="#c8c8c8" stroke-width="0.6"/></g><g transform="translate(208,474.3)"><path d="M2.5,0.5 H15.5 Q17.5,0.5 17.5,2.5 V8 Q17.5,10 15.5,10 H7 L3,13 L4,10 H2.5 Q0.5,10 0.5,8 V2.5 Q0.5,0.5 2.5,0.5 Z" fill="url(#pp)" stroke="#c47ad8"/><path d="M4,4 H14 M4,6.5 H14" stroke="#777" stroke-width="0.9"/></g><rect x="208.5" y="499.8" width="17" height="10.5" rx="1.5" fill="url(#pp)" stroke="#c47ad8"/><ellipse cx="217" cy="528.8" rx="8.7" ry="4.8" fill="url(#pp)" stroke="#c47ad8"/><path d="M208.5,560.3 L217,545.3 L225.5,560.3 Z" fill="url(#pp)" stroke="#c88ae0"/><path d="M224,569.3 L213,577.3 L220,575.8 L210,584.3" fill="none" stroke="#6a6a6a" stroke-width="1.1"/><path d="M208,596.3 H225 M208,599.3 H225 M208,602.3 H225 M208,605.3 H225" stroke="#8a8a8a" stroke-width="0.9"/><g transform="translate(209,617.3)"><rect x="0.5" y="0.5" width="15.5" height="14" fill="#eef2f6" stroke="#3a78b8"/><rect x="0.5" y="0.5" width="15.5" height="3.5" fill="#5a98d8"/><path d="M1,7 H10 M1,10 H10 M5,4 V14" stroke="#c0c8d0" stroke-width="0.8"/><circle cx="12" cy="11.5" r="4" fill="#8a3ab8"/><path d="M12,10 V14" stroke="#fff" stroke-width="1.2"/><circle cx="12" cy="8.8" r="0.7" fill="#fff"/></g><g transform="translate(208,643.3)"><path d="M0.5,0.5 H17 V10.5 H4 L0.5,7 Z" fill="#a8c8ec" stroke="#4a5a6a"/><path d="M6,8 H13 M8,2.5 V7 M8,3 H10 V7" stroke="#333" stroke-width="0.8" fill="none"/></g></svg>
<div class="pt" style="left:230px;top:129.2px">Process</div>
<div class="pt" style="left:230px;top:153.2px">External Entity</div>
<div class="pt" style="left:230px;top:177.2px">Data Store</div>
<div class="pt" style="left:230px;top:201.2px">Data Flow</div>
<div class="pt" style="left:230px;top:225.2px">Bidirectional Data Flow</div>
<div class="pt" style="left:230px;top:249.2px">In Flow</div>
<div class="pt" style="left:230px;top:273.2px">Out Flow</div>
<div class="pt" style="left:230px;top:307.2px">Package</div>
<div class="pt" style="left:230px;top:331.2px">Diagram Overview</div>
<div class="pt" style="left:230px;top:355.2px">ETL Table</div>
<div class="pt" style="left:230px;top:379.2px">Generic Connector</div>
<div class="pt" style="left:230px;top:403.2px">User Story</div>
<div class="pt" style="left:230px;top:427.2px">Image</div>
<div class="pt" style="left:230px;top:451.2px">Screen Capture</div>
<div class="pt" style="left:230px;top:475.2px">Callout</div>
<div class="pt" style="left:230px;top:499.2px">Rectangle</div>
<div class="pt" style="left:230px;top:523.2px">Oval</div>
<div class="pt" style="left:230px;top:547.2px">Polygon</div>
<div class="pt" style="left:230px;top:571.2px">Line</div>
<div class="pt" style="left:230px;top:595.2px">Text Box</div>
<div class="pt" style="left:230px;top:619.2px">Diagram Info</div>
<div class="pt" style="left:230px;top:643.2px">Business Rule</div>
<div class="a" style="left:200px;top:668px;width:140px;height:5px;overflow:hidden"><div class="pt" style="left:30px;top:-0.8px">Business Rule Link</div></div>
<svg class="a" style="left:334px;top:315px" width="9" height="9" viewBox="0 0 9 9" ><path d="M1,8 L8,1 V8 Z" fill="#1e1e1e"/></svg>
<svg class="a" style="left:334px;top:651px" width="9" height="9" viewBox="0 0 9 9" ><path d="M1,8 L8,1 V8 Z" fill="#1e1e1e"/></svg>
<svg class="a" style="left:268px;top:675px" width="11" height="10" viewBox="0 0 11 10" ><path d="M1,2 L5.5,9 L10,2 Z" fill="#555"/></svg>
<svg class="a" style="left:0;top:0" width="1200" height="713">
<g fill="none" stroke="#000" stroke-width="1">
<path d="M485.5,216 V158.5 H1040.5 V216"/><path d="M1048.8,201.7 L1040.5,216 L1032.2,201.7"/>
<path d="M693,232.5 H531"/><path d="M545.3,240.8 L531,232.5 L545.3,224.2"/>
<path d="M531,268.5 H594.5 V264.5 H693"/><path d="M678.7,256.2 L693,264.5 L678.7,272.8"/>
<path d="M472.5,370 V326.5 H578.5 L595.5,284.5 H693"/><path d="M678.7,276.2 L693,284.5 L678.7,292.8"/>
<path d="M530,378.5 H607.5 L632.5,326.5 H745.5 V284"/><path d="M737.2,298.3 L745.5,284 L753.8,298.3"/>
<path d="M530,395.5 H666"/><path d="M651.7,387.2 L666,395.5 L651.7,403.8"/>
<path d="M499,420 V463.5 H753.5 V430"/><path d="M745.2,444.3 L753.5,430 L761.8,444.3"/>
<path d="M472.5,420 V528 L596,561.5 H672"/><path d="M657.7,553.2 L672,561.5 L657.7,569.8"/>
<path d="M531,596.5 H674"/><path d="M659.7,588.2 L674,596.5 L659.7,604.8"/>
<path d="M797,232.5 H959"/><path d="M944.7,224.2 L959,232.5 L944.7,240.8"/>
<path d="M959,257.5 H888.5 V282.5 H791"/><path d="M805.3,290.8 L791,282.5 L805.3,274.2"/>
<path d="M841,387.5 H990"/><path d="M975.7,379.2 L990,387.5 L975.7,395.8"/>
<path d="M990,409.5 H841"/><path d="M855.3,417.8 L841,409.5 L855.3,401.2"/>
<path d="M832,571.5 H959"/><path d="M944.7,563.2 L959,571.5 L944.7,579.8"/>
</g>
<rect x="479" y="528.6" width="88" height="20" fill="#fff"/>
<g stroke="#000" stroke-width="1" font-family="Liberation Sans" font-size="13" letter-spacing="0.1">
<rect x="407.5" y="216.5" width="121" height="66" rx="12" ry="12" fill="#f5e89b" stroke="#000"/>
<rect stroke="none" x="408.0" y="240.5" width="120" height="18" fill="#fff"/>
<path fill="none" d="M407.5,240.5 H528.5 M407.5,258.5 H528.5 M431.5,216.5 V240.5"/>
<text stroke="none" x="467.0" y="255.5" text-anchor="middle">Process Payments</text>
<text x="409.8" y="226.0" font-size="12.5" textLength="6" lengthAdjust="spacingAndGlyphs" letter-spacing="0" fill="#000" stroke="#fff" stroke-width="1.8" stroke-linejoin="round" style="paint-order:stroke">a</text>
<rect x="692.5" y="216.5" width="103" height="66" rx="12" ry="12" fill="#f5e89b" stroke="#000"/>
<rect stroke="none" x="693.0" y="240.5" width="102" height="18" fill="#fff"/>
<path fill="none" d="M692.5,240.5 H795.5 M692.5,258.5 H795.5 M716.5,216.5 V240.5"/>
<text stroke="none" x="743.0" y="255.5" text-anchor="middle">Process Orders</text>
<text x="694.8" y="226.0" font-size="12.5" textLength="6" lengthAdjust="spacingAndGlyphs" letter-spacing="0" fill="#000" stroke="#fff" stroke-width="1.8" stroke-linejoin="round" style="paint-order:stroke">a</text>
<rect x="666.5" y="362.5" width="173" height="66" rx="12" ry="12" fill="#f5e89b" stroke="#000"/>
<rect stroke="none" x="667.0" y="386.5" width="172" height="18" fill="#fff"/>
<path fill="none" d="M666.5,386.5 H839.5 M666.5,404.5 H839.5 M690.5,362.5 V386.5"/>
<text stroke="none" x="752.0" y="401.5" text-anchor="middle">Handle Customer Accounts</text>
<text x="668.8" y="372.0" font-size="12.5" textLength="6" lengthAdjust="spacingAndGlyphs" letter-spacing="0" fill="#000" stroke="#fff" stroke-width="1.8" stroke-linejoin="round" style="paint-order:stroke">a</text>
<rect x="671.5" y="536.5" width="157" height="66" rx="12" ry="12" fill="#f5e89b" stroke="#000"/>
<rect stroke="none" x="672.0" y="560.5" width="156" height="18" fill="#fff"/>
<path fill="none" d="M671.5,560.5 H828.5 M671.5,578.5 H828.5 M695.5,536.5 V560.5"/>
<text stroke="none" x="749.0" y="575.5" text-anchor="middle">Manage Product Catalog</text>
<text x="673.8" y="546.0" font-size="12.5" textLength="6" lengthAdjust="spacingAndGlyphs" letter-spacing="0" fill="#000" stroke="#fff" stroke-width="1.8" stroke-linejoin="round" style="paint-order:stroke">a</text>
</g>
<g stroke="#000" stroke-width="1" font-family="Liberation Sans" font-size="13" letter-spacing="0.1">
<rect x="415.5" y="370.5" width="113" height="48" fill="#f5e89b" stroke="#000"/>
<text stroke="none" x="472.0" y="399.5" text-anchor="middle">Customer</text>
<text x="417.8" y="380.0" font-size="12.5" textLength="6" lengthAdjust="spacingAndGlyphs" letter-spacing="0" fill="#000" stroke="#fff" stroke-width="1.8" stroke-linejoin="round" style="paint-order:stroke">a</text>
<rect x="415.5" y="571.5" width="113" height="48" fill="#f5e89b" stroke="#000"/>
<text stroke="none" x="469.5" y="600.5" text-anchor="middle">Admin</text>
<text x="417.8" y="581.0" font-size="12.5" textLength="6" lengthAdjust="spacingAndGlyphs" letter-spacing="0" fill="#000" stroke="#fff" stroke-width="1.8" stroke-linejoin="round" style="paint-order:stroke">a</text>
<rect stroke="none" x="959.5" y="216.5" width="37" height="48" fill="#cccccc"/>
<rect stroke="none" x="996.5" y="216.5" width="110.5" height="48" fill="#f5e89b"/>
<path fill="none" d="M1107,216.5 H959.5 V264.5 H1107 M996.5,216.5 V264.5"/>
<text stroke="none" x="1051.75" y="245.5" text-anchor="middle">Order Database</text>
<text stroke="none" x="973.5" y="230.8">D</text>
<text x="961.8" y="226.0" font-size="12.5" textLength="6" lengthAdjust="spacingAndGlyphs" letter-spacing="0" fill="#000" stroke="#fff" stroke-width="1.8" stroke-linejoin="round" style="paint-order:stroke">a</text>
<rect stroke="none" x="990.5" y="370.5" width="37" height="48" fill="#cccccc"/>
<rect stroke="none" x="1027.5" y="370.5" width="132.5" height="48" fill="#f5e89b"/>
<path fill="none" d="M1160,370.5 H990.5 V418.5 H1160 M1027.5,370.5 V418.5"/>
<text stroke="none" x="1093.75" y="399.5" text-anchor="middle">Customer Database</text>
<text stroke="none" x="1004.5" y="384.8">D</text>
<text x="992.8" y="380.0" font-size="12.5" textLength="6" lengthAdjust="spacingAndGlyphs" letter-spacing="0" fill="#000" stroke="#fff" stroke-width="1.8" stroke-linejoin="round" style="paint-order:stroke">a</text>
<rect stroke="none" x="959.5" y="546.5" width="37" height="48" fill="#cccccc"/>
<rect stroke="none" x="996.5" y="546.5" width="122.5" height="48" fill="#f5e89b"/>
<path fill="none" d="M1119,546.5 H959.5 V594.5 H1119 M996.5,546.5 V594.5"/>
<text stroke="none" x="1057.75" y="575.5" text-anchor="middle">Product Database</text>
<text stroke="none" x="973.5" y="560.8">D</text>
<text x="961.8" y="556.0" font-size="12.5" textLength="6" lengthAdjust="spacingAndGlyphs" letter-spacing="0" fill="#000" stroke="#fff" stroke-width="1.8" stroke-linejoin="round" style="paint-order:stroke">a</text>
</g>
<g font-family="Liberation Sans" font-size="13" letter-spacing="0.1" fill="#000">
<text x="727.7" y="152.9">Payment Data</text>
<text x="557.7" y="219">Payment Request</text>
<text x="551.7" y="253.5">Payment Confirmation</text>
<text x="844.3" y="220">Order Details</text>
<text x="877.3" y="304">Order Data</text>
<text x="486.25" y="320.75">Add to Cart</text>
<text x="654.5" y="318.75">Place Order</text>
<text x="552.2" y="421.3">Customer Profile</text>
<text x="574.4" y="458.9">Update Account</text>
<text x="877.2" y="380">Account Data</text>
<text x="871.6" y="430.8">Customer Data</text>
<text x="482.4" y="546">View Products</text>
<text x="581.4" y="625.6">Update Catalog</text>
<text x="877.3" y="601">Product Data</text>
</g>
</svg>
</body></html>
